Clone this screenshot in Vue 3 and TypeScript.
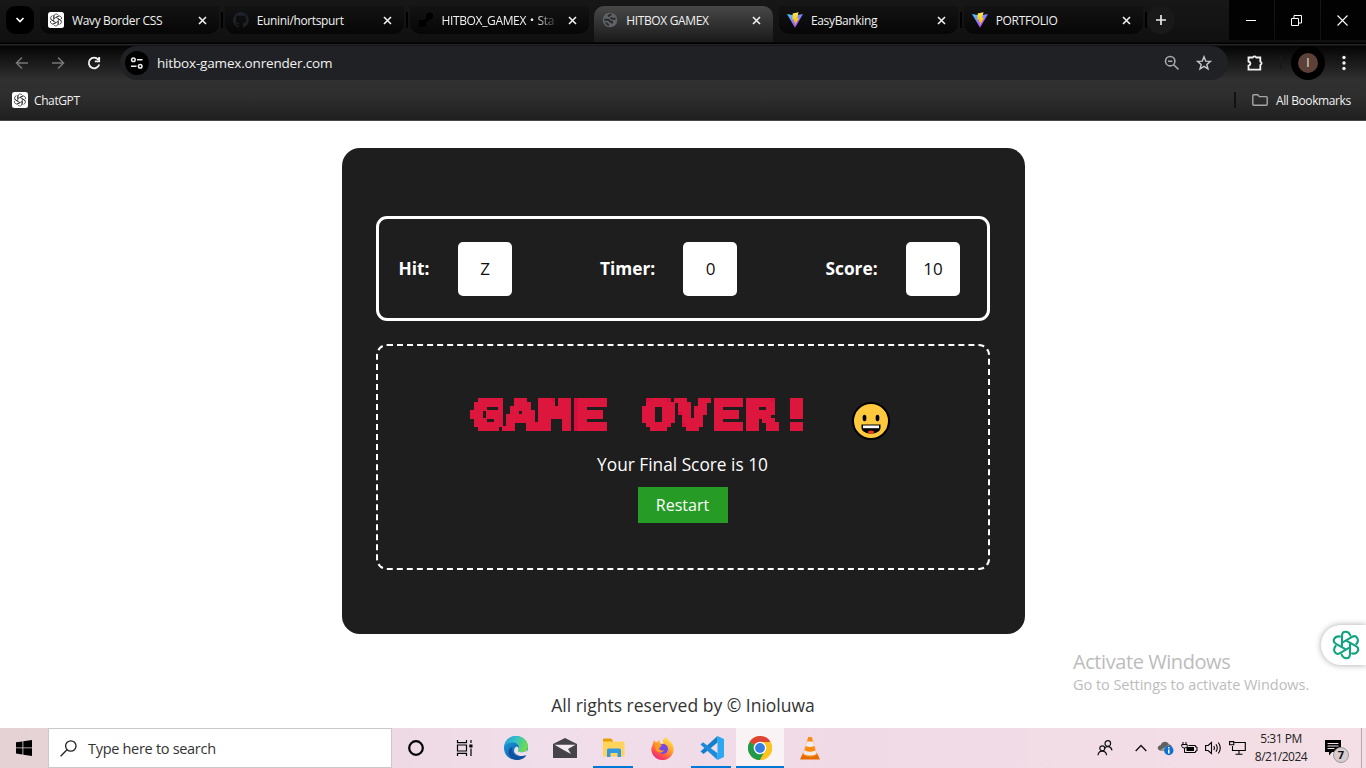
<script setup lang="ts">
interface Tab {
  title: string
  icon: 'gpt' | 'github' | 'render' | 'globe' | 'vite'
  active?: boolean
  divider?: boolean
  fade?: boolean
}

const tabs: Tab[] = [
  { title: 'Wavy Border CSS', icon: 'gpt', divider: true },
  { title: 'Eunini/hortspurt', icon: 'github', divider: true },
  { title: 'HITBOX_GAMEX・Sta', icon: 'render', fade: true },
  { title: 'HITBOX GAMEX', icon: 'globe', active: true },
  { title: 'EasyBanking', icon: 'vite', divider: true },
  { title: 'PORTFOLIO', icon: 'vite', divider: true },
]

const stats = [
  { label: 'Hit:', value: 'Z', cls: 'hit' },
  { label: 'Timer:', value: '0', cls: 'timer' },
  { label: 'Score:', value: '10', cls: 'score' },
]

const petals = [0, 60, 120, 180, 240, 300]
</script>

<template>
  <div class="screen">
    <svg class="defs" width="0" height="0">
      <defs>
        <linearGradient id="viteBlue" x1="0" y1="0" x2=".7" y2="1"><stop offset="0" stop-color="#41d1ff" /><stop offset="1" stop-color="#bd34fe" /></linearGradient>
        <linearGradient id="viteBolt" x1="0" y1="0" x2="0" y2="1"><stop offset="0" stop-color="#ffea83" /><stop offset=".2" stop-color="#ffdd35" /><stop offset="1" stop-color="#ffa800" /></linearGradient>
        <linearGradient id="edgeTop" x1="0" y1="0" x2="1" y2=".3"><stop offset="0" stop-color="#2596d8" /><stop offset=".5" stop-color="#32c1c9" /><stop offset="1" stop-color="#6bdc55" /></linearGradient>
        <linearGradient id="edgeBody" x1="0" y1="0" x2="1" y2="1"><stop offset="0" stop-color="#1b9de2" /><stop offset="1" stop-color="#0c4f9c" /></linearGradient>
        <linearGradient id="fox" x1=".8" y1="0" x2=".2" y2="1"><stop offset="0" stop-color="#fff04f" /><stop offset=".45" stop-color="#ff9a2e" /><stop offset=".75" stop-color="#ff4a4e" /><stop offset="1" stop-color="#e3208c" /></linearGradient>
        <g id="knot" fill="none">
          <path v-for="a in petals" :key="a" d="M-4 1.500V-6.500A4.300 4.300 0 0 1 3.400 -9.300M0 -4.400L5.500 -7.500" :transform="`rotate(${a})`" />
        </g>
        <filter id="blocks" filterUnits="userSpaceOnUse" x="0" y="0" width="348" height="40">
          <feFlood x="2" y="2" width="1" height="1" flood-color="#000" />
          <feOffset x="0" y="0" width="4" height="4" dx="0" dy="0" />
          <feTile result="grid" />
          <feComposite in="SourceGraphic" in2="grid" operator="in" />
          <feComponentTransfer><feFuncA type="linear" slope="40" intercept="-18" /></feComponentTransfer>
          <feMorphology operator="dilate" radius="2" />
        </filter>
      </defs>
    </svg>

    <header class="browser">
      <div class="tabstrip">
        <div class="tabsearch"><svg width="10" height="6" viewBox="0 0 10 6"><path d="M1.500 1l3.500 3.500L8.500 1" fill="none" stroke="#fff" stroke-width="1.700" /></svg></div>
        <div class="tabs">
          <div v-for="t in tabs" :key="t.title" class="slot">
            <div class="tab" :class="{ active: t.active }">
              <svg class="fav" width="16" height="16" viewBox="0 0 16 16">
                <template v-if="t.icon === 'gpt'">
                  <rect width="16" height="16" rx="2.500" fill="#fff" />
                  <use href="#knot" transform="translate(8 8) scale(.56)" stroke="#222" stroke-width="1.300" />
                </template>
                <path v-else-if="t.icon === 'github'" fill="#1d2228" d="M8 0a8 8 0 0 0-2.500 15.600c.4.1.5-.2.5-.4v-1.500c-2.200.5-2.700-1-2.700-1-.4-.9-.9-1.200-.9-1.200-.7-.5.100-.5.100-.5.800.1 1.200.8 1.200.8.7 1.200 1.900.9 2.300.7.100-.5.300-.9.500-1.100-1.800-.2-3.600-.9-3.600-4 0-.9.300-1.600.8-2.100-.1-.2-.4-1 .1-2.100 0 0 .7-.2 2.200.8a7.500 7.500 0 0 1 4 0c1.500-1 2.200-.8 2.200-.8.4 1.100.2 1.900.1 2.100.5.600.8 1.300.8 2.100 0 3.100-1.900 3.700-3.700 4 .3.200.6.7.6 1.500v2.200c0 .2.100.5.600.4A8 8 0 0 0 8 0z" />
                <g v-else-if="t.icon === 'render'" fill="#000"><circle cx="11.500" cy="4" r="3.500" /><path d="M1 8h5l4-3 2 2-4 4v4H1z" /></g>
                <g v-else-if="t.icon === 'globe'"><circle cx="8" cy="8" r="7.300" fill="#5f6368" /><path d="M2.200 7.800h3.600c2 0 1.800 2.200 4.200 2.200v1.500M9.500 2.500c-2.500 0-2.500 1.200-3.500 2M13.500 6.800h-3c-1 0-1-.8-2-1" fill="none" stroke="#29292a" stroke-width="2" /><path d="M3 9.500l4 2.500v2L4 12.500z" fill="#29292a" /></g>
                <g v-else><path d="M0 2l8 13.700L16 2 8 3.500z" fill="url(#viteBlue)" /><path d="M11.500.2L5.700 1.400 5.300 7.700l2-.4-.5 2.900 1.600-.5-.6 4.100 4.200-8.100-1.900.4z" fill="url(#viteBolt)" /></g>
              </svg>
              <span class="title" :class="{ fade: t.fade }">{{ t.title }}</span>
              <svg class="close" width="9" height="9" viewBox="0 0 9 9"><path d="M1 1l7 7M8 1L1 8" stroke="#f0f0f0" stroke-width="1.600" /></svg>
            </div>
            <i v-if="t.divider" class="divider"></i>
          </div>
        </div>
        <div class="newtab"><svg width="12" height="12" viewBox="0 0 12 12"><path d="M6 1v10M1 6h10" stroke="#e8e8e8" stroke-width="1.700" /></svg></div>
        <div class="wincontrols">
          <span><svg width="10" height="10"><path d="M0 5.500h10" stroke="#fff" /></svg></span>
          <span><svg width="11" height="11"><path d="M.5 3.500h7v7h-7zM3 3V.5h7.500V8H8" fill="none" stroke="#fff" /></svg></span>
          <span><svg width="11" height="11"><path d="M.5.5l10 10M10.500.5l-10 10" stroke="#fff" stroke-width="1.100" /></svg></span>
        </div>
      </div>

      <div class="toolbar">
        <span class="nav"><svg width="14" height="14" viewBox="0 0 14 14"><path d="M13 7H2M7 1.500L1.500 7 7 12.500" fill="none" stroke="#777" stroke-width="1.500" /></svg></span>
        <span class="nav"><svg width="14" height="14" viewBox="0 0 14 14"><path d="M1 7h11M7 1.500L12.500 7 7 12.500" fill="none" stroke="#777" stroke-width="1.500" /></svg></span>
        <span class="nav"><svg width="14" height="14" viewBox="0 0 14 14"><path d="M11.200 3.600A5.300 5.300 0 1 0 12.200 8.500M12.200 1v4.400H7.800" fill="none" stroke="#f2f2f2" stroke-width="1.800" /></svg></span>
        <div class="omnibox">
          <span class="site"><svg width="14" height="12" viewBox="0 0 14 12" fill="none" stroke="#eee" stroke-width="1.500"><circle cx="3.400" cy="2.700" r="1.800" /><path d="M7 2.700h5.500M1 9.300h5.500" /><circle cx="10.200" cy="9.300" r="1.800" /></svg></span>
          <span class="url">hitbox-gamex.onrender.com</span>
          <svg class="zoomicon" width="16" height="16" viewBox="0 0 16 16" fill="none" stroke="#a9a9ab" stroke-width="1.600"><circle cx="6.200" cy="6.200" r="4.700" /><path d="M9.700 9.700l4.800 4.800M4 6.200h4.400" /></svg>
          <svg class="star" width="16" height="16" viewBox="0 0 16 16" fill="none" stroke="#c8c8ca" stroke-width="1.400"><path d="M8 1.800l1.700 4.300 4.700.3-3.600 3 1.200 4.500L8 11.400l-4 2.500 1.200-4.500-3.600-3 4.700-.3z" /></svg>
        </div>
        <svg class="puzzle" width="18" height="18" viewBox="0 0 18 18" fill="none" stroke="#f2f2f2" stroke-width="1.800"><path d="M2.500 3.500h4.200q1.800-2.200 3.600 0h4v4q2.600 1.800 0 3.600v4.500H2.500v-4c2.600-.5 2.600-3.600 0-4.100z" /></svg>
        <i class="vline"></i>
        <span class="avatar"><b>I</b></span>
        <svg class="dots" width="4" height="16" viewBox="0 0 4 16" fill="#f2f2f2"><circle cx="2" cy="2.500" r="1.700" /><circle cx="2" cy="8" r="1.700" /><circle cx="2" cy="13.500" r="1.700" /></svg>
      </div>

      <div class="bookmarks">
        <svg width="16" height="16" viewBox="0 0 16 16"><rect width="16" height="16" rx="2.500" fill="#fff" /><use href="#knot" transform="translate(8 8) scale(.56)" stroke="#222" stroke-width="1.300" /></svg>
        <span class="bm">ChatGPT</span>
        <i class="bline"></i>
        <svg class="folder" width="16" height="12" viewBox="0 0 16 12"><path d="M.8 1.800q0-1 1-1h4l1.600 1.800h6.800q1 0 1 1v6.600q0 1-1 1H1.800q-1 0-1-1z" fill="none" stroke="#a5a5a5" stroke-width="1.400" /></svg>
        <span class="all">All Bookmarks</span>
      </div>
    </header>

    <main class="page">
      <section class="card">
        <div class="stats">
          <div v-for="s in stats" :key="s.label" class="stat">
            <strong :class="s.cls">{{ s.label }}</strong>
            <span class="value">{{ s.value }}</span>
          </div>
        </div>
        <div class="result">
          <div class="headline">
            <svg class="gameover" width="344" height="40" viewBox="0 0 344 40">
              <g filter="url(#blocks)"><text x="0" y="35" textLength="343" lengthAdjust="spacingAndGlyphs" xml:space="preserve">GAME OVER!</text></g>
            </svg>
            <svg class="smile" width="38" height="38" viewBox="0 0 38 38"><circle cx="19" cy="19" r="18" fill="#ffc83d" stroke="#000" stroke-width="2" /><ellipse cx="12.500" cy="16" rx="1.900" ry="3.200" /><ellipse cx="25.500" cy="16" rx="1.900" ry="3.200" /><path d="M9.500 22.500h19v3c0 8-19 8-19 0z" /><path d="M11 23.500h16v2.700H11z" fill="#fff" /><ellipse cx="19" cy="30" rx="3" ry="1.600" fill="#f03a17" /></svg>
          </div>
          <p class="final">Your Final Score is 10</p>
          <button class="restart">Restart</button>
        </div>
      </section>
      <footer class="rights">All rights reserved by © Inioluwa</footer>
      <div class="watermark"><div class="w1">Activate Windows</div><div class="w2">Go to Settings to activate Windows.</div></div>
      <div class="assistant">
        <svg width="28" height="30" viewBox="0 0 28 30" fill="none" stroke="#10a37f" stroke-width="2.100" stroke-linecap="round" stroke-linejoin="round">
          <path v-for="a in petals" :key="a" d="M-4 1V-9.200C-4 -14.500 2.500 -14.500 4.300 -9.500" :transform="`translate(14 15) rotate(${a})`" />
        </svg>
      </div>
    </main>

    <nav class="taskbar">
      <div class="start"><svg width="16" height="16" viewBox="0 0 16 16"><path d="M0 2.300l6.500-.9v6.100H0zM7.300 1.300L16 0v7.500H7.300zM0 8.300h6.500v6.200L0 13.600zM7.300 8.300H16V16l-8.700-1.300z" /></svg></div>
      <div class="search"><svg width="17" height="17" viewBox="0 0 17 17" fill="none" stroke="#222" stroke-width="1.300"><circle cx="10.800" cy="6" r="5.200" /><path d="M7 9.800L.6 16.200" /></svg><span>Type here to search</span></div>
      <div class="apps">
        <span class="system"><svg width="16" height="16"><circle cx="8" cy="8" r="6.800" fill="none" stroke="#000" stroke-width="2.200" /></svg></span>
        <span class="system last"><svg width="17" height="16" viewBox="0 0 17 16" fill="none" stroke="#000" stroke-width="1.200"><path d="M1.500 0v2.600h9V0M1.500 5h9v6h-9zM1.500 16v-2.600h9V16M15 0v3M15 8.500V16" /><path d="M13.300 4.500h3.200v3h-3.200z" fill="#000" stroke="none" /></svg></span>
        <span><svg width="24" height="24" viewBox="0 0 24 24"><circle cx="12" cy="12" r="12" fill="url(#edgeBody)" /><path d="M0 11C1 4 6 0 12 0c7 0 12 5 12 10.500 0 4-3 5.800-6.500 5.800-3 0-4.300-1-3.200-2.500C16.500 10 13 6.500 9 6.500 5 6.500 1.500 8 0 11z" fill="url(#edgeTop)" /><path d="M14.300 13.800c-1.100 1.500.2 2.500 3.200 2.500 2.800 0 5.200-1 6.200-3v5l-1 .6c-7 3-13-1-12.700-4.500.1-1.800 1-3 2.500-4 2 .4 2.800 2 1.800 3.400z" fill="#efdfe8" /><path d="M8.500 11c-2 8 6 12 14 8.300C19 25 9 26 5 19c-1.300-4 0-7 3.500-8z" fill="#11509e" /></svg></span>
        <span><svg width="24" height="20" viewBox="0 0 24 20"><path d="M0 6L12 0l12 6v14H0z" fill="#46424a" /><path d="M1.500 6.700h21L15 11l3 5-7-3.700z" fill="#f5e9ef" /></svg></span>
        <span class="open"><svg width="22" height="20" viewBox="0 0 22 20"><path d="M0 1.500Q0 .5 1 .5h7l2 2V8H0z" fill="#e5a000" /><path d="M0 3.500h20q1.500 0 1.500 1.500v13.500H0z" fill="#ffd35c" /><path d="M4 19v-7q0-1.500 1.500-1.500h11Q18 10.500 18 12v7h-3.500v-4h-7v4z" fill="#3298e0" /></svg></span>
        <span><svg width="23" height="23" viewBox="0 0 23 23"><path d="M1.500 8L3 3l2 2.500L9 3l-.5 3 4 1-1-4 4-3c1 3 4 3.500 6 7.500 3.500 7-1.500 15-9 15.500C5 23.500-.5 17 .5 11z" fill="url(#fox)" /><circle cx="12" cy="12" r="5" fill="#7349e8" /><path d="M4 7c3-1 5 .5 7 1.500l-3 2.800c.5 2.400 3 2.700 5 1.700-1.500 4-8 3-8.500-1z" fill="#ff9a20" /></svg></span>
        <span class="open"><svg width="24" height="24" viewBox="0 0 24 24"><path d="M17.500 0L24 3v18l-6.500 3z" fill="#2aa9f2" /><path d="M17.500 0v6.500L3.500 18 .5 15.500 17.500 0z" fill="#117fc9" /><path d="M3 6.200l14.500 11V24L.5 8.400z" fill="#1b8cdb" /></svg></span>
        <span class="open current"><svg width="24" height="24" viewBox="0 0 24 24"><circle cx="12" cy="12" r="12" fill="#fcc31e" /><path d="M12 12L1.600 6A12 12 0 0 1 22.400 6z" fill="#de4334" /><path d="M12 12L1.600 6A12 12 0 0 0 12 24l5-9z" fill="#229a4c" /><path d="M12 6h10.400A12 12 0 0 1 12 24l5.200-9z" fill="#fcc31e" /><circle cx="12" cy="12" r="6.300" fill="#fff" /><circle cx="12" cy="12" r="4.900" fill="#347de2" /></svg></span>
        <span><svg width="20" height="23" viewBox="0 0 20 23"><path d="M3 16h14l3 6.500H0z" fill="#e46b00" /><path d="M8.200 0h3.600L17 18q-7 4-14 0z" fill="#ff8a10" /><path d="M7 4.500h6l1.300 4.500q-4.300 2-8.600 0zM4.500 13.300q5.500 3 11 0l1 3.700q-6.500 3-13 0z" fill="#f2eded" /></svg></span>
      </div>
      <div class="tray">
        <span class="people"><svg width="16" height="16" viewBox="0 0 16 16" fill="none" stroke="#111" stroke-width="1.200"><circle cx="10.800" cy="3.500" r="2.800" /><path d="M7.500 8.300c2-2.500 6.500-2.500 7.500 2" /><circle cx="5.300" cy="8.300" r="2.500" /><path d="M1 15.300c.5-5.500 8-5.500 8.600 0" /></svg></span>
        <span><svg width="12" height="8"><path d="M.7 7L6 1.500 11.300 7" fill="none" stroke="#111" stroke-width="1.300" /></svg></span>
        <span><svg width="17" height="16" viewBox="0 0 17 16"><path d="M3 10.500C-1 9 1 5.500 3.500 5.300 5.500 0 11 1.500 12 4.500c2 0 3 1.500 2.700 3L8 11z" fill="#62605f" /><path d="M3.500 10l8-5 3 3-6 3z" fill="#aaa7a6" /><circle cx="11.800" cy="10.500" r="4.700" fill="#1270cf" /><path d="M11.800 7v1.600M11.800 9.600v4" stroke="#fff" stroke-width="1.500" /></svg></span>
        <span><svg width="17" height="12" viewBox="0 0 17 12" fill="none" stroke="#000"><path d="M2 0v2M5 0v2M.8 2.500h5.400v2q-.5 1.500-2.700 1.500Q1 6 .8 4.500zM3.500 6v4.500h11v-1.500h1.500v-4h-1.500v-1.500h-7" /><path d="M5.500 5h7.500v4H5.500z" fill="#000" stroke="none" /></svg></span>
        <span><svg width="17" height="14" viewBox="0 0 17 14" fill="none" stroke="#000" stroke-width="1.100"><path d="M.6 4.500h2.500l3.400-3v11l-3.400-3H.6zM8.800 5q1.200 2 0 4M11 3.200q2.500 3.800 0 7.600M13.300 1.500q4 5.500 0 11" /></svg></span>
        <span><svg width="17" height="14" viewBox="0 0 17 14" fill="none" stroke="#000" stroke-width="1.100"><path d="M5.500 1.500h10.800v8H3.500V5M10 9.500v3.700M6.500 13.200h7M.6.600h4.200v3.200H.6z" /></svg></span>
        <div class="clock"><span class="time">5:31 PM</span><span class="date">8/21/2024</span></div>
        <div class="action"><svg width="16" height="16" viewBox="0 0 16 16"><path d="M0 0h16v12H7l-3 3.500V12H0z" /><path d="M2.500 3.500h11M2.500 6h11M2.500 8.500h7" stroke="#f3dfe6" stroke-width="1" /></svg><b>7</b></div>
        <i class="peek"></i>
      </div>
    </nav>
  </div>
</template>

<style>
body { margin: 0; overflow: hidden; }
</style>

<style scoped>
* { box-sizing: border-box; }
.screen { width: 1366px; height: 768px; display: flex; flex-direction: column; overflow: hidden; font-family: "Open Sans", "Noto Sans", "Noto Sans CJK JP", sans-serif; white-space: nowrap; }
.defs { position: absolute; }
svg { display: block; flex: none; }
.browser { height: 121px; flex: none; color: #f0f0f0; font-size: 12px; border-bottom: 1px solid #484848; background: linear-gradient(#171717 0, #101010 42px, #000 43px, #000 44px, #252525 44px, #252525 45px, #050505 46px, #303030 80px, #2e2e2e 96px, #1f1f1f 120px); }
.tabstrip { height: 45px; display: flex; align-items: flex-start; }
.tabsearch { width: 28px; height: 28px; margin: 6px 6px 0; border-radius: 9px; background: #000; display: flex; align-items: center; justify-content: center; }
.tabs { display: flex; width: 1107px; }
.slot { width: 184.750px; flex: none; height: 43px; padding-top: 6px; display: flex; }
.tab { width: 179px; height: 28px; display: flex; align-items: center; padding: 0 12px 0 8px; border-radius: 0 0 10px 10px; background: linear-gradient(#131313, #060606); }
.tab.active { height: 36px; padding-bottom: 8px; border-radius: 10px 10px 0 0; background: linear-gradient(#484848, #1a1a1a); }
.title { width: 122px; margin-left: 8px; padding-top: 1px; line-height: 20px; letter-spacing: -.36px; overflow: hidden; }
.fade { mask-image: linear-gradient(90deg, #000 76%, transparent 96%); }
.close { margin-left: 4px; }
.divider { width: 2px; height: 16px; margin: 6px 0 0 2px; background: #000; flex: none; }
.newtab { width: 28px; height: 28px; margin-top: 6px; border-radius: 50%; background: #191919; display: flex; align-items: center; justify-content: center; }
.wincontrols { margin-left: auto; display: flex; gap: 1px; }
.wincontrols span { width: 45px; height: 40px; padding-right: 2px; background: #020202; display: flex; align-items: center; justify-content: center; }
.toolbar { height: 36px; display: flex; align-items: center; padding-left: 4px; }
.nav { width: 36px; display: flex; justify-content: center; }
.omnibox { width: 1108px; height: 34px; margin-left: 8px; border-radius: 17px; background: #202124; display: flex; align-items: center; padding-left: 5px; }
.site { width: 24px; height: 24px; border-radius: 50%; background: #000; display: flex; align-items: center; justify-content: center; }
.url { font-size: 13.500px; letter-spacing: -.17px; margin-left: 8px; color: #f2f2f2; }
.zoomicon { margin-left: auto; }
.star { margin: 0 16px; }
.puzzle { margin-left: 18px; }
.vline { width: 2px; height: 12px; background: #191919; margin-left: 16px; }
.avatar { width: 34px; height: 34px; margin-left: 9px; border-radius: 50%; background: #000; display: flex; align-items: center; justify-content: center; }
.avatar b { width: 20px; height: 20px; border-radius: 50%; background: #5d4037; font: 12px/20px Roboto, sans-serif; text-align: center; color: #ddd; }
.dots { margin-left: 17px; }
.bookmarks { height: 38px; display: flex; align-items: center; padding-left: 12px; font-size: 12px; letter-spacing: -.4px; }
.bm { margin-left: 6px; }
.bline { width: 2px; height: 16px; margin-left: auto; background: #111; }
.folder { margin: 0 8px 0 16px; }
.all { width: 76px; margin-right: 14px; }
.page { height: 607px; flex: none; background: #fff; position: relative; display: flex; flex-direction: column; align-items: center; padding-top: 27px; }
.card { width: 683px; height: 486px; border-radius: 18px; background: #1e1e1e; color: #fff; padding: 68px 35px 64px 34px; font-size: 18px; }
.stats { height: 105px; border: 3px solid #fff; border-radius: 11px; padding: 0 27px 0 20px; display: flex; justify-content: space-between; align-items: center; }
.stat { display: flex; align-items: center; gap: 28px; }
.stat strong { font-size: 17.300px; }
.hit { width: 31px; }
.timer { width: 55px; }
.score { width: 52px; }
.value { width: 54px; height: 54px; padding-left: 1px; background: #fff; border-radius: 5px; color: #111; text-align: center; line-height: 54px; font-size: 17px; }
.result { height: 226px; margin-top: 23px; border: 2px dashed #fff; border-radius: 11px; display: flex; flex-direction: column; align-items: center; }
.headline { display: flex; align-self: flex-start; margin: 48px 0 0 92px; height: 48px; }
.gameover { overflow: visible; }
.gameover text { font: bold 40px "DejaVu Sans Mono", monospace; fill: #dc143c; stroke: #dc143c; stroke-width: 2; }
.smile { margin: 8px 0 0 38px; }
.final { margin: 10px 0 0; line-height: 26px; font-size: 17.300px; }
.restart { width: 90px; height: 36px; margin-top: 9px; border: 0; padding: 0; background: #269b26; color: #fff; font: 16px "Open Sans", sans-serif; }
.rights { margin-top: 57px; line-height: 28px; font-size: 17.500px; color: #333; }
.watermark { position: absolute; left: 1073px; top: 528px; color: #bcbcbc; }
.w1 { font-size: 20px; line-height: 26px; letter-spacing: -.43px; }
.w2 { font-size: 14.500px; line-height: 20px; letter-spacing: -.04px; }
.assistant { position: absolute; right: 0; top: 504px; width: 45px; height: 40px; border-radius: 20px 0 0 20px; background: #fff; box-shadow: 0 0 6px rgba(0, 0, 0, .35); display: flex; align-items: center; padding-left: 11px; }
.taskbar { height: 40px; flex: none; display: flex; background: linear-gradient(90deg, #e4d2d4 0, #eedae4 390px, #f0deea 550px, #f0dae6 850px, #f4dfe6 1366px); }
.start { width: 48px; display: flex; align-items: center; justify-content: center; }
.search { width: 344px; background: #fff; border: 1px solid #c9c9c9; display: flex; align-items: center; padding-left: 11px; font-size: 14.500px; letter-spacing: -.3px; color: #333; }
.search span { margin-left: 11px; }
.apps { display: flex; }
.apps > span { width: 49px; display: flex; align-items: center; justify-content: center; position: relative; }
.apps > .system { width: 48px; }
.apps > .last { margin-right: 3px; }
.apps > .open::after { content: ""; position: absolute; bottom: 0; left: 4px; width: 40px; height: 2px; background: #0078d7; }
.apps > .current { width: 48px; margin-right: 1px; background: #faf3f6; }
.apps > .current::after { left: 0; width: 48px; }
.tray { margin-left: auto; display: flex; align-items: center; height: 40px; }
.tray > span { width: 24px; display: flex; justify-content: center; }
.tray > .people { margin-right: 12px; }
.clock { width: 64px; display: flex; flex-direction: column; align-items: center; font-size: 12px; line-height: 18px; letter-spacing: -.5px; color: #222; }
.action { width: 36px; margin-left: 12px; position: relative; }
.action b { position: absolute; left: 8px; top: 7px; width: 16px; height: 16px; border-radius: 50%; background: #d8ccd0; border: 1px solid #999; font-size: 11px; line-height: 14px; text-align: center; color: #111; }
.peek { width: 1px; height: 40px; background: #b9a6ad; margin-right: 4px; }
</style>
